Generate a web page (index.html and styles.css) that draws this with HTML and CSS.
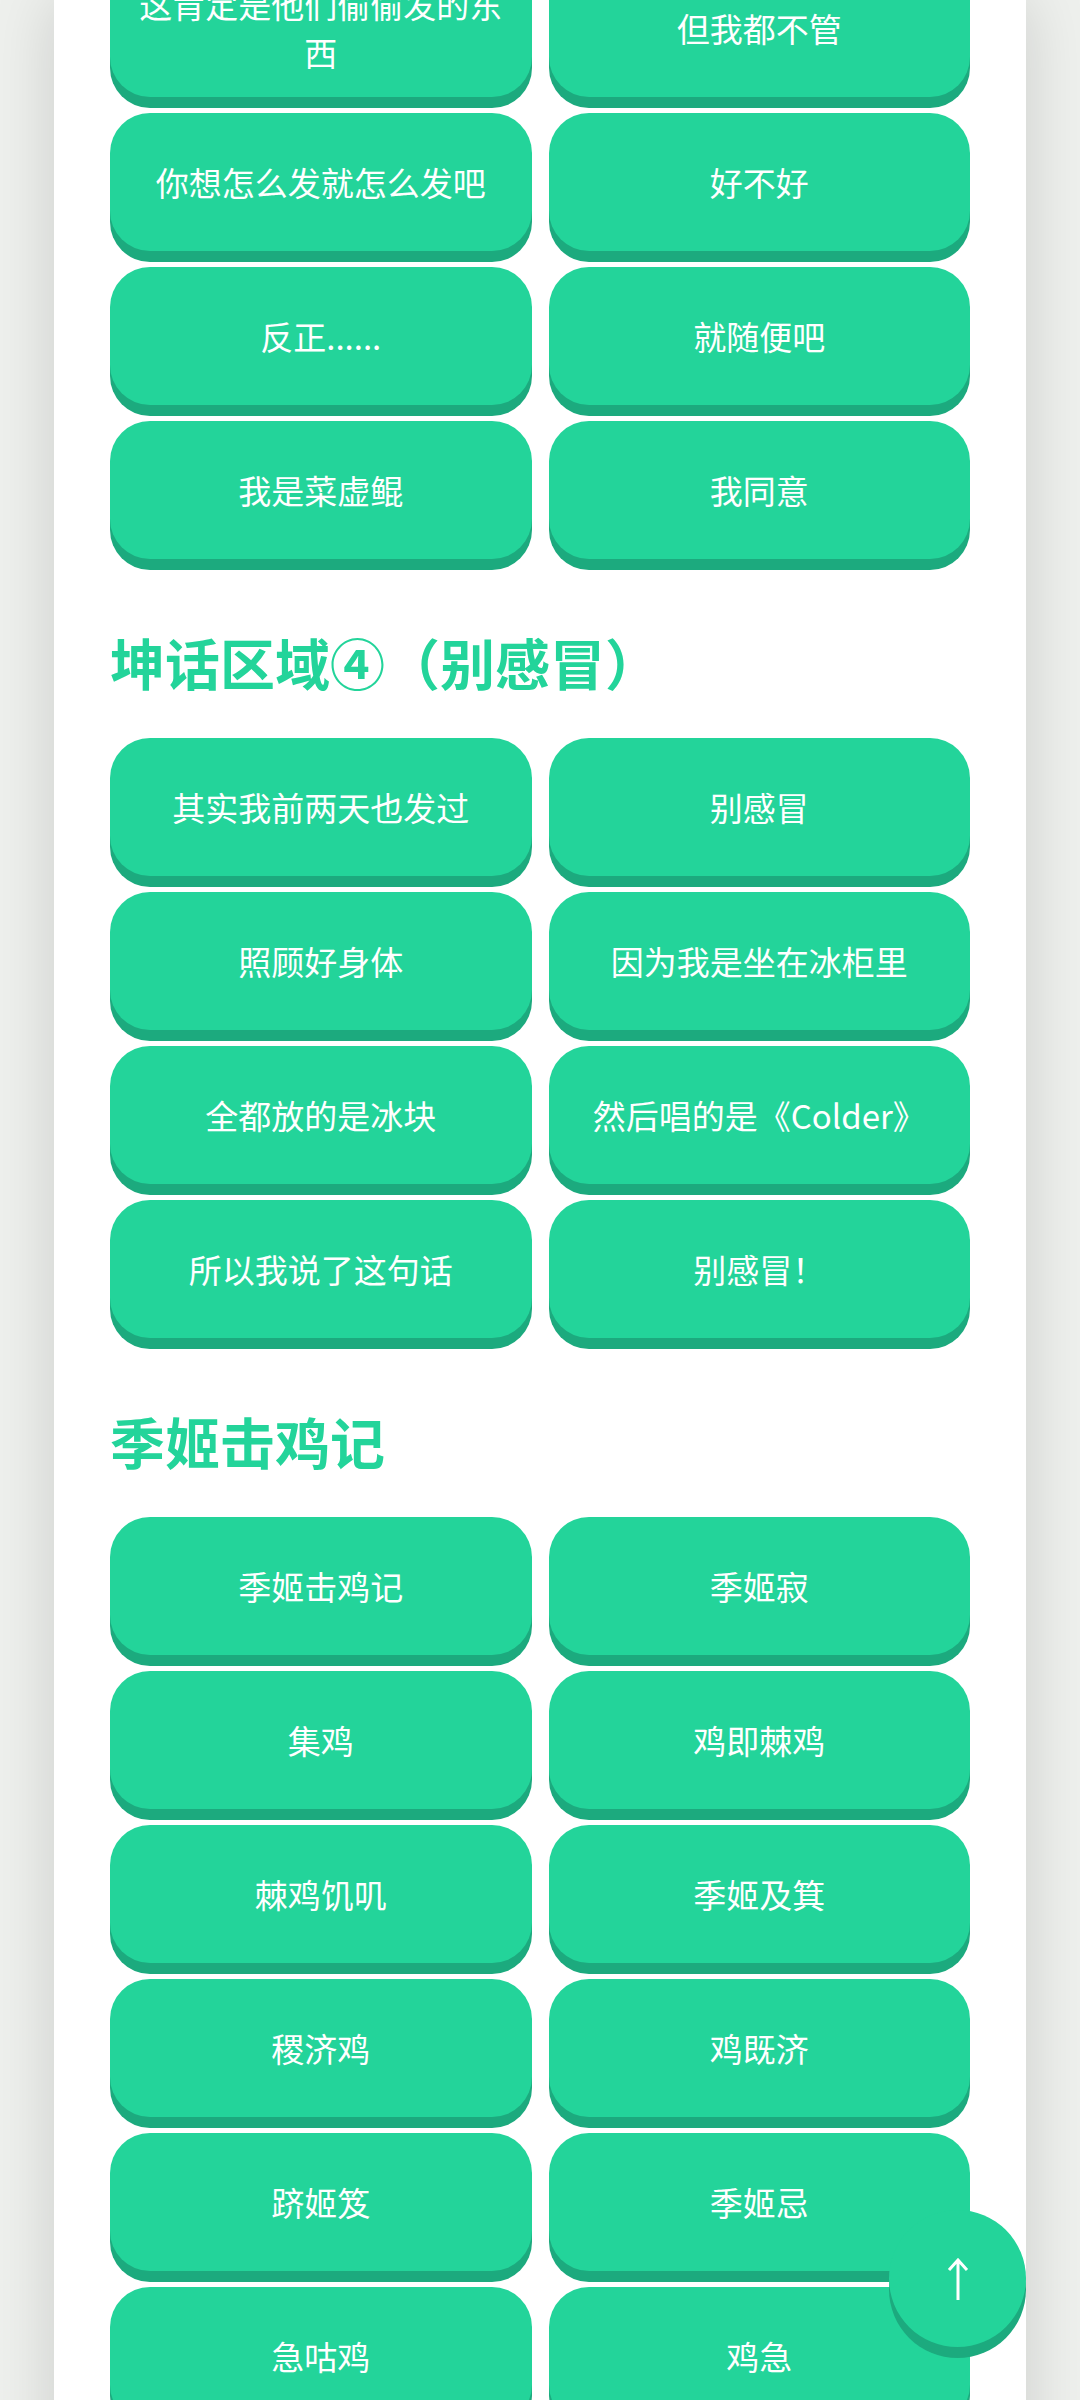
FILE: index.html
```html
<!DOCTYPE html>
<html lang="zh-CN">
<head>
    <meta charset="UTF-8">
    <meta name="viewport" content="width=device-width, initial-scale=1.0">
    <title>坤话按钮</title>
    <link rel="stylesheet" href="styles.css">
</head>
<body>
    <main class="panel">
        <div class="grid grid-first">
            <button class="btn">这肯定是他们偷偷发的东西</button>
            <button class="btn">但我都不管</button>
            <button class="btn">你想怎么发就怎么发吧</button>
            <button class="btn">好不好</button>
            <button class="btn">反正......</button>
            <button class="btn">就随便吧</button>
            <button class="btn">我是菜虚鲲</button>
            <button class="btn">我同意</button>
        </div>

        <h2 class="title">坤话区域④（别感冒）</h2>
        <div class="grid">
            <button class="btn">其实我前两天也发过</button>
            <button class="btn">别感冒</button>
            <button class="btn">照顾好身体</button>
            <button class="btn">因为我是坐在冰柜里</button>
            <button class="btn">全都放的是冰块</button>
            <button class="btn">然后唱的是《Colder》</button>
            <button class="btn">所以我说了这句话</button>
            <button class="btn">别感冒！</button>
        </div>

        <h2 class="title">季姬击鸡记</h2>
        <div class="grid">
            <button class="btn">季姬击鸡记</button>
            <button class="btn">季姬寂</button>
            <button class="btn">集鸡</button>
            <button class="btn">鸡即棘鸡</button>
            <button class="btn">棘鸡饥叽</button>
            <button class="btn">季姬及箕</button>
            <button class="btn">稷济鸡</button>
            <button class="btn">鸡既济</button>
            <button class="btn">跻姬笈</button>
            <button class="btn">季姬忌</button>
            <button class="btn">急咕鸡</button>
            <button class="btn">鸡急</button>
        </div>
    </main>

    <button class="top-btn" id="top-btn" aria-label="回到顶部">
        <svg width="22" height="42" viewBox="0 0 22 42">
            <path d="M11 2 V42 M2 12 L11 2 L20 12" fill="none" stroke="#fff" stroke-width="3"/>
        </svg>
    </button>

    <script>
        var topBtn = document.getElementById("top-btn");
        topBtn.addEventListener("click", function(){
            window.scrollTo({ top: 0, behavior: "smooth" });
        });
    </script>
</body>
</html>
```

FILE: styles.css
```css
html{background-color: #eef0ed;}
body{margin: 0; padding: 0; font-family: "Noto Sans CJK SC", "Noto Sans", sans-serif;}

.panel{
    width: 90%;
    min-height: 100vh;
    margin: 0 auto;
    padding: 0 56px 60px;
    box-sizing: border-box;
    background-color: #fff;
    box-shadow: 0 0 60px rgba(0, 0, 0, 0.15);
    display: flow-root;
}

.grid{
    display: grid;
    grid-template-columns: 1fr 1fr;
    column-gap: 17px;
    row-gap: 16px;
}
.grid-first{margin-top: -41px;}

.title{
    margin: 62px 0 37px;
    font-size: 55px;
    line-height: 80px;
    font-weight: bold;
    color: #23d49a;
}

.btn{
    height: 138px;
    display: flex;
    align-items: center;
    justify-content: center;
    padding: 0 20px;
    border: none;
    border-radius: 40px;
    background-color: #23d49a;
    box-shadow: 0 11px 0 #1caa7e;
    color: #fff;
    font-family: inherit;
    font-size: 33px;
    line-height: normal;
    text-align: center;
    cursor: pointer;
}

.top-btn{
    position: fixed;
    right: 54px;
    bottom: 53px;
    width: 137px;
    height: 137px;
    padding: 0;
    border: none;
    border-radius: 50%;
    background-color: #23d49a;
    box-shadow: 0 11px 0 #1caa7e;
    display: flex;
    align-items: center;
    justify-content: center;
    cursor: pointer;
}
```
